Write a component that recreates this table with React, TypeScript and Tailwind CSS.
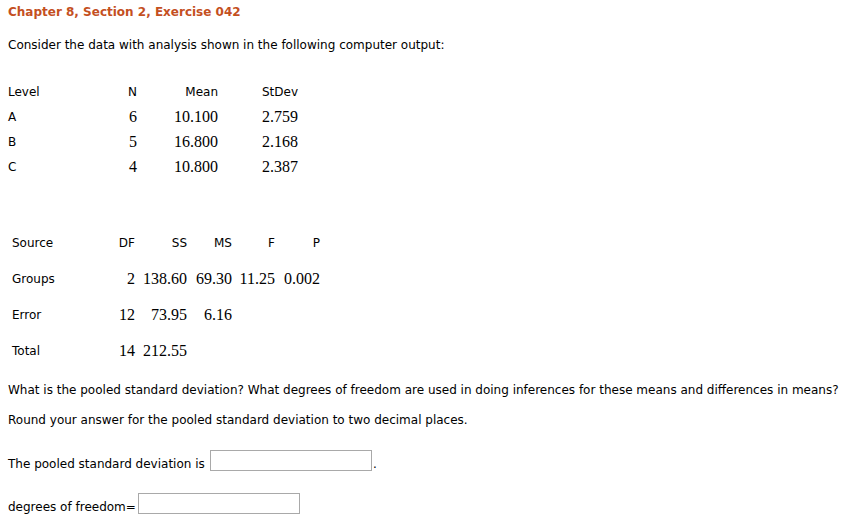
const levels = [
  { level: 'A', n: '6', mean: '10.100', sd: '2.759' },
  { level: 'B', n: '5', mean: '16.800', sd: '2.168' },
  { level: 'C', n: '4', mean: '10.800', sd: '2.387' },
];

const anova = [
  { source: 'Groups', df: '2', ss: '138.60', ms: '69.30', f: '11.25', p: '0.002' },
  { source: 'Error', df: '12', ss: '73.95', ms: '6.16', f: '', p: '' },
  { source: 'Total', df: '14', ss: '212.55', ms: '', f: '', p: '' },
];

const num = "font-['Liberation_Serif',serif] text-[16px]";

export default function App() {
  return (
    <div className="min-h-[518px] bg-white px-2 font-['DejaVu_Sans',Verdana,sans-serif] text-[12px] text-black">
      <div className="h-[25px] leading-[25px] font-bold text-[#c4501f]">
        Chapter 8, Section 2, Exercise 042
      </div>
      <p className="mt-[10px] h-[20px] leading-[20px]">
        Consider the data with analysis shown in the following computer output:
      </p>

      {/* descriptive stats */}
      <div className="mt-[24px] grid grid-cols-[100px_29px_81px_80px] auto-rows-[25px] items-center">
        <div>Level</div>
        <div className="text-right">N</div>
        <div className="text-right">Mean</div>
        <div className="text-right">StDev</div>
        {levels.map(r => (
          <div key={r.level} className="contents">
            <div>{r.level}</div>
            <div className={`text-right ${num}`}>{r.n}</div>
            <div className={`text-right ${num}`}>{r.mean}</div>
            <div className={`text-right ${num}`}>{r.sd}</div>
          </div>
        ))}
      </div>

      {/* anova table */}
      <div className="mt-[46px] ml-1 grid grid-cols-[100px_23px_52px_45px_43px_45px] auto-rows-[36px] items-center">
        <div>Source</div>
        <div className="text-right">DF</div>
        <div className="text-right">SS</div>
        <div className="text-right">MS</div>
        <div className="text-right">F</div>
        <div className="text-right">P</div>
        {anova.map(r => (
          <div key={r.source} className="contents">
            <div>{r.source}</div>
            <div className={`text-right ${num}`}>{r.df}</div>
            <div className={`text-right ${num}`}>{r.ss}</div>
            <div className={`text-right ${num}`}>{r.ms}</div>
            <div className={`text-right ${num}`}>{r.f}</div>
            <div className={`text-right ${num}`}>{r.p}</div>
          </div>
        ))}
      </div>

      <p className="mt-[11px] h-[20px] leading-[20px] whitespace-nowrap">
        What is the pooled standard deviation? What degrees of freedom are used in doing inferences for these means and differences in means?
      </p>
      <p className="mt-[10px] h-[20px] leading-[20px]">
        Round your answer for the pooled standard deviation to two decimal places.
      </p>

      <div className="mt-[20px] flex items-start">
        <span className="mt-[4px] h-[20px] leading-[20px] w-[202px]">The pooled standard deviation is</span>
        <input type="text" className="h-[21px] w-[162px] border border-[#a9a9a9] bg-white outline-none" />
        <span className="mt-[4px] h-[20px] leading-[20px] ml-[1px]">.</span>
      </div>

      <div className="mt-[19px] flex items-start">
        <span className="mt-[4px] h-[20px] leading-[20px] w-[130px]">degrees of freedom=</span>
        <input type="text" className="h-[21px] w-[162px] border border-[#a9a9a9] bg-white outline-none" />
      </div>
    </div>
  );
}
